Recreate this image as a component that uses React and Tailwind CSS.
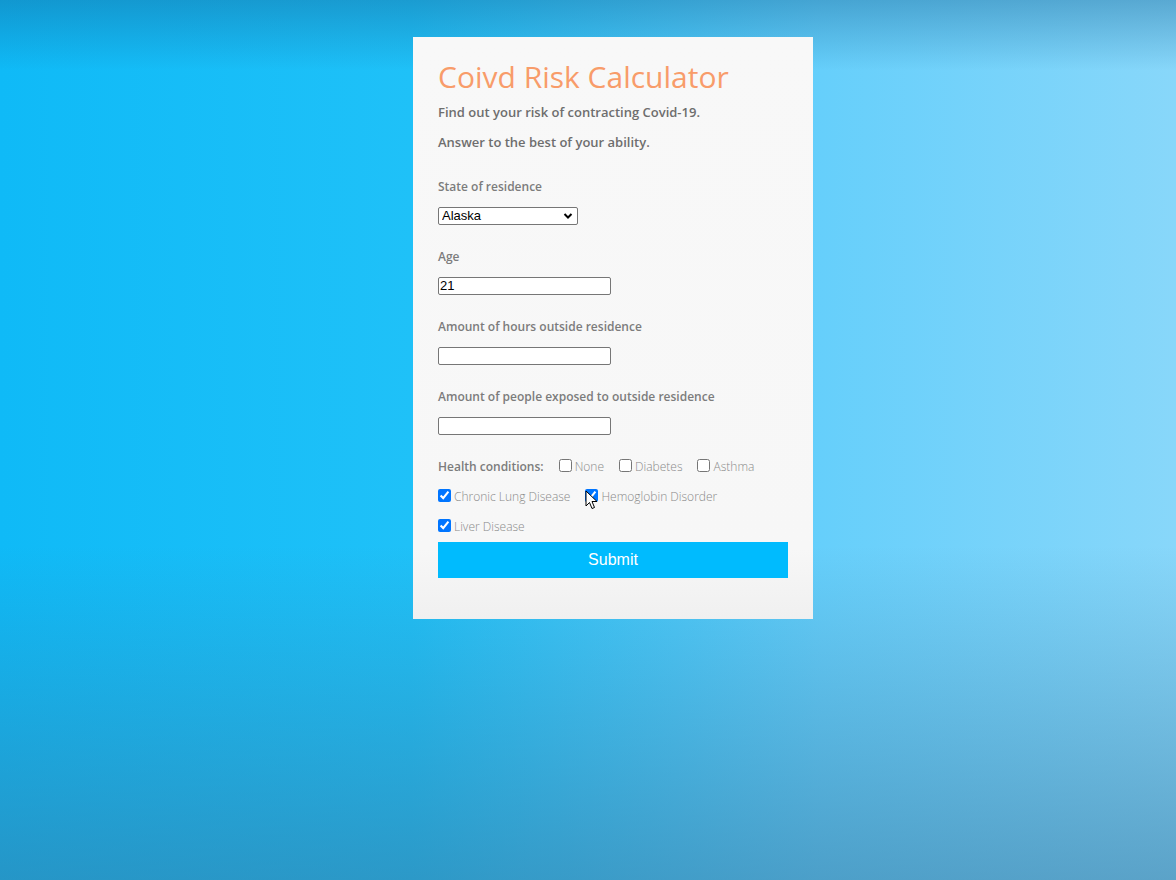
import React from "react";

function Check({ label, checked, cursor }) {
  return (
    <label className="relative flex items-center h-[30px] mr-[15px]">
      <input
        type="checkbox"
        defaultChecked={checked}
        className="m-0 mr-[3px] w-[13px] h-[13px] -translate-y-[1px]"
      />
      <span className="text-[12px] font-light text-[#8a8a8a] leading-[18px] translate-y-[1px]">{label}</span>
      {cursor && (
        <svg
          className="absolute left-[0px] top-[9px]"
          width="13"
          height="20"
          viewBox="0 0 13 20"
        >
          <path
            d="M1 1 L1 16 L4.5 12.5 L7 18.5 L9.5 17.5 L7 11.5 L12 11.5 Z"
            fill="#fff"
            stroke="#000"
            strokeWidth="1"
            strokeLinejoin="round"
          />
        </svg>
      )}
    </label>
  );
}

export default function App() {
  return (
    <div
      className="w-[1176px] h-[880px] overflow-hidden flex items-start bg-[linear-gradient(180deg,rgba(20,100,150,0.4)_0%,rgba(20,110,160,0)_8%,rgba(20,110,160,0)_62%,rgba(55,120,160,0.55)_100%),linear-gradient(90deg,#0fbaf7_0%,#1fc1f8_35%,#66cffb_70%,#88d7fa_100%)]"
      style={{ fontFamily: '"Open Sans", "Noto Sans", sans-serif' }}
    >
      <div className="ml-[413px] mt-[37px] w-[400px] h-[582px] bg-[linear-gradient(180deg,#f8f8f8_0%,#f7f7f7_88%,#f0f0f0_100%)] px-[25px] pt-[20px] flex flex-col">
        <h1 className="text-[30px] leading-[40px] text-[#f89c6a] font-normal">
          Coivd Risk Calculator
        </h1>
        <p className="mt-[6px] text-[13px] leading-[18px] font-semibold text-[#6e6e6e]">
          Find out your risk of contracting Covid-19.
        </p>
        <p className="mt-[12px] text-[13px] leading-[18px] font-semibold text-[#6e6e6e]">
          Answer to the best of your ability.
        </p>

        <label className="mt-[27px] text-[12px] leading-[18px] font-semibold text-[#7c7c7c]">
          State of residence
        </label>
        <div className="relative mt-[11px] w-[140px] h-[18px]">
          <select
            className="block appearance-none w-[140px] h-[18px] border border-[#767676] rounded-[2px] bg-white pl-[3px] text-[13px] leading-[16px] text-black"
            style={{ fontFamily: '"Liberation Sans", Arial, sans-serif' }}
            defaultValue="Alaska"
          >
            <option>Alabama</option>
            <option>Alaska</option>
            <option>Arizona</option>
          </select>
          <svg
            className="absolute right-[5px] top-[5px] pointer-events-none"
            width="10"
            height="8"
            viewBox="0 0 10 8"
          >
            <path d="M1.5 2 L5 5.5 L8.5 2" fill="none" stroke="#000" strokeWidth="2" />
          </svg>
        </div>

        <label className="mt-[23px] text-[12px] leading-[18px] font-semibold text-[#7c7c7c]">
          Age
        </label>
        <input
          type="text"
          defaultValue="21"
          className="mt-[11px] w-[173px] h-[18px] border border-[#767676] rounded-[2px] bg-white px-[1px] text-[13px] text-black"
          style={{ fontFamily: '"Liberation Sans", Arial, sans-serif' }}
        />

        <label className="mt-[23px] text-[12px] leading-[18px] font-semibold text-[#7c7c7c]">
          Amount of hours outside residence
        </label>
        <input
          type="text"
          className="mt-[11px] w-[173px] h-[18px] border border-[#767676] rounded-[2px] bg-white px-[1px] text-[13px] text-black"
        />

        <label className="mt-[23px] text-[12px] leading-[18px] font-semibold text-[#7c7c7c]">
          Amount of people exposed to outside residence
        </label>
        <input
          type="text"
          className="mt-[11px] w-[173px] h-[18px] border border-[#767676] rounded-[2px] bg-white px-[1px] text-[13px] text-black"
        />

        <div className="mt-[16px] flex flex-wrap items-center w-[350px]">
          <span className="h-[30px] flex items-center mr-[15px] text-[12px] font-semibold text-[#7c7c7c] translate-y-[1px]">
            Health conditions:
          </span>
          <Check label="None" />
          <Check label="Diabetes" />
          <Check label="Asthma" />
          <Check label="Chronic Lung Disease" checked />
          <Check label="Hemoglobin Disorder" checked cursor />
          <Check label="Liver Disease" checked />
        </div>

        <button
          type="button"
          className="mt-[1px] w-[350px] h-[36px] bg-[#00bbfe] text-white text-[16px]"
          style={{ fontFamily: '"Liberation Sans", Arial, sans-serif' }}
        >
          Submit
        </button>
      </div>
    </div>
  );
}
